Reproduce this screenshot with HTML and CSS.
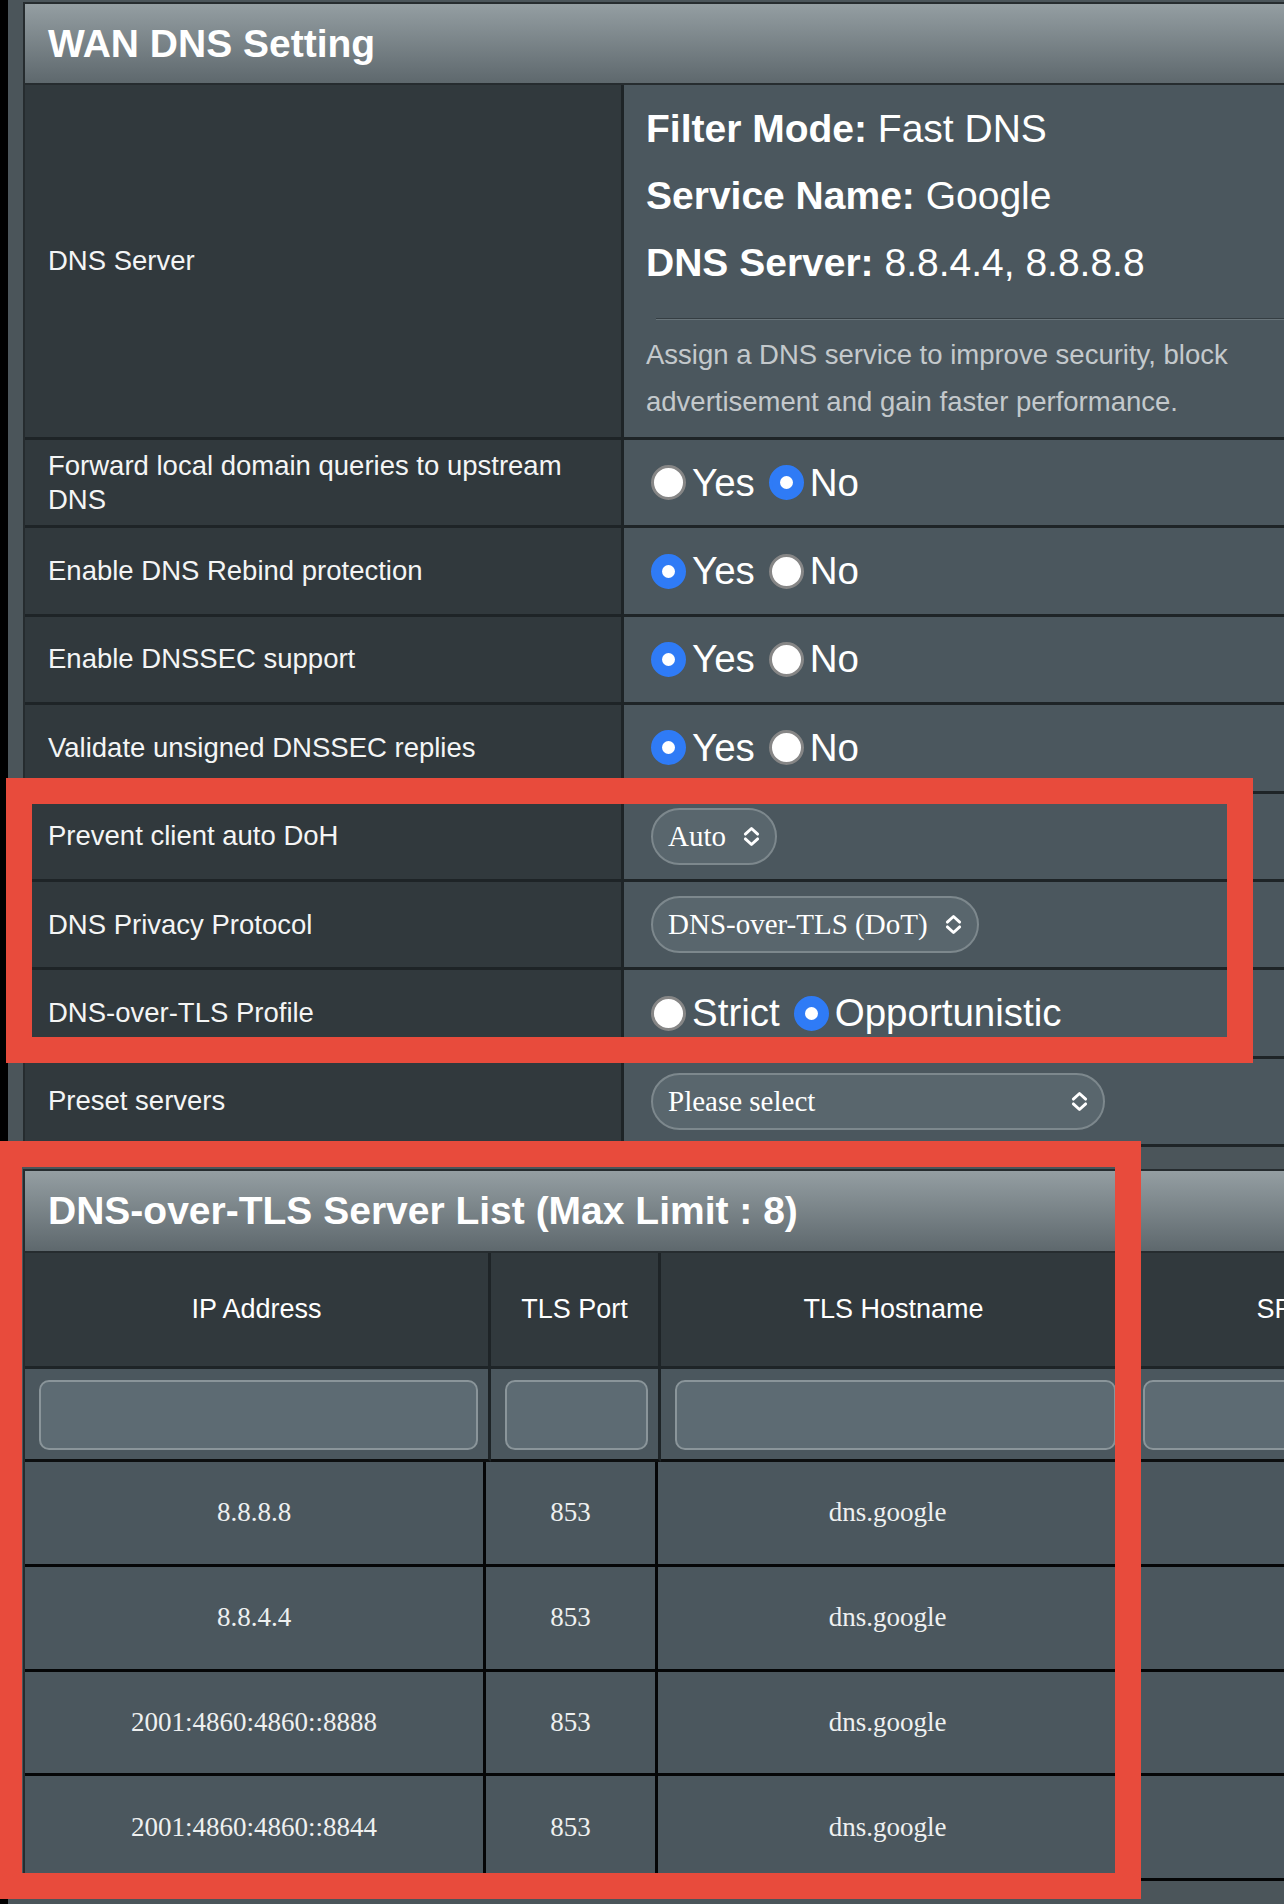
FILE: index.html
```html
<!DOCTYPE html>
<html lang="en">
<head>
<meta charset="utf-8">
<title>WAN DNS Setting</title>
<link rel="stylesheet" href="styles.css">
</head>
<body>
<div class="page">
  <section class="panel">
    <div class="panel-head">WAN DNS Setting</div>

    <div class="row row-tall">
      <div class="label">DNS Server</div>
      <div class="value value-info">
        <div class="info"><b>Filter Mode:</b> Fast DNS</div>
        <div class="info"><b>Service Name:</b> Google</div>
        <div class="info"><b>DNS Server:</b> 8.8.4.4, 8.8.8.8</div>
        <div class="sep"></div>
        <p class="desc">Assign a DNS service to improve security, block advertisement and gain faster performance.</p>
      </div>
    </div>

    <div class="row">
      <div class="label label-wrap">Forward local domain queries to upstream DNS</div>
      <div class="value">
        <div class="opts">
          <label class="opt"><span class="radio"></span>Yes</label>
          <label class="opt"><span class="radio on"></span>No</label>
        </div>
      </div>
    </div>

    <div class="row">
      <div class="label">Enable DNS Rebind protection</div>
      <div class="value">
        <div class="opts">
          <label class="opt"><span class="radio on"></span>Yes</label>
          <label class="opt"><span class="radio"></span>No</label>
        </div>
      </div>
    </div>

    <div class="row">
      <div class="label">Enable DNSSEC support</div>
      <div class="value">
        <div class="opts">
          <label class="opt"><span class="radio on"></span>Yes</label>
          <label class="opt"><span class="radio"></span>No</label>
        </div>
      </div>
    </div>

    <div class="row">
      <div class="label">Validate unsigned DNSSEC replies</div>
      <div class="value">
        <div class="opts">
          <label class="opt"><span class="radio on"></span>Yes</label>
          <label class="opt"><span class="radio"></span>No</label>
        </div>
      </div>
    </div>

    <div class="row">
      <div class="label">Prevent client auto DoH</div>
      <div class="value">
        <div class="select">
          <span>Auto</span>
          <svg class="chev" viewBox="0 0 20 24" width="19" height="23"><path d="M3.5 9.5 L10 3.5 L16.5 9.5 M3.5 14.5 L10 20.5 L16.5 14.5"/></svg>
        </div>
      </div>
    </div>

    <div class="row">
      <div class="label">DNS Privacy Protocol</div>
      <div class="value">
        <div class="select">
          <span>DNS-over-TLS (DoT)</span>
          <svg class="chev" viewBox="0 0 20 24" width="19" height="23"><path d="M3.5 9.5 L10 3.5 L16.5 9.5 M3.5 14.5 L10 20.5 L16.5 14.5"/></svg>
        </div>
      </div>
    </div>

    <div class="row">
      <div class="label">DNS-over-TLS Profile</div>
      <div class="value">
        <div class="opts">
          <label class="opt"><span class="radio"></span>Strict</label>
          <label class="opt"><span class="radio on"></span>Opportunistic</label>
        </div>
      </div>
    </div>

    <div class="row">
      <div class="label">Preset servers</div>
      <div class="value">
        <div class="select select-wide">
          <span>Please select</span>
          <svg class="chev" viewBox="0 0 20 24" width="19" height="23"><path d="M3.5 9.5 L10 3.5 L16.5 9.5 M3.5 14.5 L10 20.5 L16.5 14.5"/></svg>
        </div>
      </div>
    </div>
  </section>

  <section class="panel panel-list">
    <div class="panel-head panel-head-list">DNS-over-TLS Server List (Max Limit : 8)</div>

    <div class="grid-head">
      <div class="th">IP Address</div>
      <div class="th">TLS Port</div>
      <div class="th">TLS Hostname</div>
      <div class="th">SPKI Fingerprint</div>
    </div>

    <div class="grid-input">
      <div class="td-in"><input type="text" aria-label="IP Address"></div>
      <div class="td-in"><input type="text" aria-label="TLS Port"></div>
      <div class="td-in"><input type="text" aria-label="TLS Hostname"></div>
      <div class="td-in"><input type="text" aria-label="SPKI Fingerprint"></div>
    </div>

    <div class="grid-data">
      <div class="td">8.8.8.8</div><div class="td">853</div><div class="td">dns.google</div><div class="td"></div>
    </div>
    <div class="grid-data">
      <div class="td">8.8.4.4</div><div class="td">853</div><div class="td">dns.google</div><div class="td"></div>
    </div>
    <div class="grid-data">
      <div class="td">2001:4860:4860::8888</div><div class="td">853</div><div class="td">dns.google</div><div class="td"></div>
    </div>
    <div class="grid-data">
      <div class="td">2001:4860:4860::8844</div><div class="td">853</div><div class="td">dns.google</div><div class="td"></div>
    </div>
  </section>
</div>

<div class="mark mark-options"></div>
<div class="mark mark-list"></div>
</body>
</html>
```

FILE: styles.css
```css
html, body {
  margin: 0;
  padding: 0;
  overflow: hidden;
}

body {
  position: relative;
  width: 1284px;
  height: 1904px;
  background: #000;
  font-family: "Liberation Sans", Arial, Helvetica, sans-serif;
  color: #f4f5f5;
}

.page {
  margin-left: 8px;
  min-height: 1904px;
  padding: 2px 0 0 15px;
  background: #4b555a;
  box-sizing: border-box;
}

.panel {
  width: 1560px;
  border: 2px solid #262c2f;
  border-right: none;
  border-bottom: none;
}

.panel-head {
  height: 79px;
  display: flex;
  align-items: center;
  padding-left: 23px;
  background: linear-gradient(#949ea2, #5e686d);
  border-bottom: 2px solid #262c2f;
  font-weight: bold;
  font-size: 39px;
  color: #fff;
}

/* ---------- settings rows ---------- */

.row {
  display: grid;
  grid-template-columns: 599px 1fr;
  height: 88.4px;
  box-sizing: border-box;
  border-bottom: 3px solid #1e2427;
}

.row-tall {
  height: 355px;
}

.label {
  display: flex;
  align-items: center;
  padding: 0 23px;
  background: #31393d;
  border-right: 3px solid #1e2427;
  font-size: 27.5px;
  line-height: 34px;
}

.value {
  display: flex;
  align-items: center;
  padding-left: 27px;
  background: #4b575e;
}

.value-info {
  display: block;
  padding: 10px 0 0 22px;
}

.info {
  font-size: 39px;
  line-height: 67px;
  color: #fff;
  white-space: nowrap;
}

.info b {
  font-weight: bold;
}

.sep {
  margin: 22px 0 11px 10px;
  height: 2px;
  background: linear-gradient(#353e43 50%, #68747a 50%);
}

.desc {
  margin: 0;
  width: 600px;
  font-size: 27.5px;
  line-height: 47px;
  color: #c4c9cc;
}

/* radio groups */

.opts {
  display: flex;
  align-items: center;
  gap: 14px;
}

.opt {
  display: flex;
  align-items: center;
  gap: 6px;
  font-size: 38.5px;
  color: #fff;
}

.radio {
  position: relative;
  width: 35px;
  height: 35px;
  border-radius: 50%;
  box-sizing: border-box;
  background: #fff;
  border: 3px solid #868686;
}

.radio.on {
  background: #2f7bf6;
  border-color: #2f7bf6;
}

.radio.on::after {
  content: "";
  position: absolute;
  left: 50%;
  top: 50%;
  width: 13px;
  height: 13px;
  margin: -6.5px 0 0 -6.5px;
  border-radius: 50%;
  background: #fff;
}

/* select pills */

.select {
  display: flex;
  align-items: center;
  justify-content: space-between;
  gap: 16px;
  height: 57px;
  box-sizing: border-box;
  padding: 0 14px 0 15px;
  border: 2px solid #7d888d;
  border-radius: 29px;
  background: #59666d;
  font-family: "Liberation Serif", "Times New Roman", serif;
  font-size: 29px;
  color: #fff;
}

.select-wide {
  width: 454px;
}

.chev {
  flex: none;
  fill: none;
  stroke: #fff;
  stroke-width: 3;
  stroke-linecap: round;
  stroke-linejoin: round;
}

/* ---------- server list ---------- */

.panel-list {
  margin-top: 22px;
}

.panel-head-list {
  height: 80px;
}

.grid-head,
.grid-input {
  display: grid;
  grid-template-columns: 466px 170px 468px 1fr;
}

.th {
  display: flex;
  align-items: center;
  justify-content: center;
  height: 116px;
  box-sizing: border-box;
  background: #31393d;
  border-right: 3px solid #1e2427;
  border-bottom: 3px solid #1e2427;
  font-size: 27px;
  color: #fff;
  white-space: nowrap;
}

.td-in {
  height: 93px;
  box-sizing: border-box;
  padding: 11px 10px 0 14px;
  background: #4b575e;
  border-right: 3px solid #1e2427;
  border-bottom: 3px solid #0d0f10;
}

.td-in input {
  display: block;
  width: 100%;
  height: 70px;
  box-sizing: border-box;
  margin: 0;
  border: 2px solid #8a959a;
  border-radius: 10px;
  background: #5d6b73;
  outline: none;
}

.grid-data {
  display: grid;
  grid-template-columns: 461px 172px 462px 1fr;
  height: 104.7px;
  box-sizing: border-box;
  border-bottom: 3px solid #050607;
}

.td {
  display: flex;
  align-items: center;
  justify-content: center;
  background: #4b575e;
  border-right: 3px solid #050607;
  font-family: "Liberation Serif", "Times New Roman", serif;
  font-size: 27px;
  color: #eef0f0;
}

/* ---------- highlight frames drawn over the page ---------- */

.mark {
  position: absolute;
  box-sizing: border-box;
  border: 26px solid #e84b3c;
}

.mark-options {
  left: 6px;
  top: 778px;
  width: 1247px;
  height: 285px;
}

.mark-list {
  left: -4px;
  top: 1141px;
  width: 1145px;
  height: 758px;
}
```
